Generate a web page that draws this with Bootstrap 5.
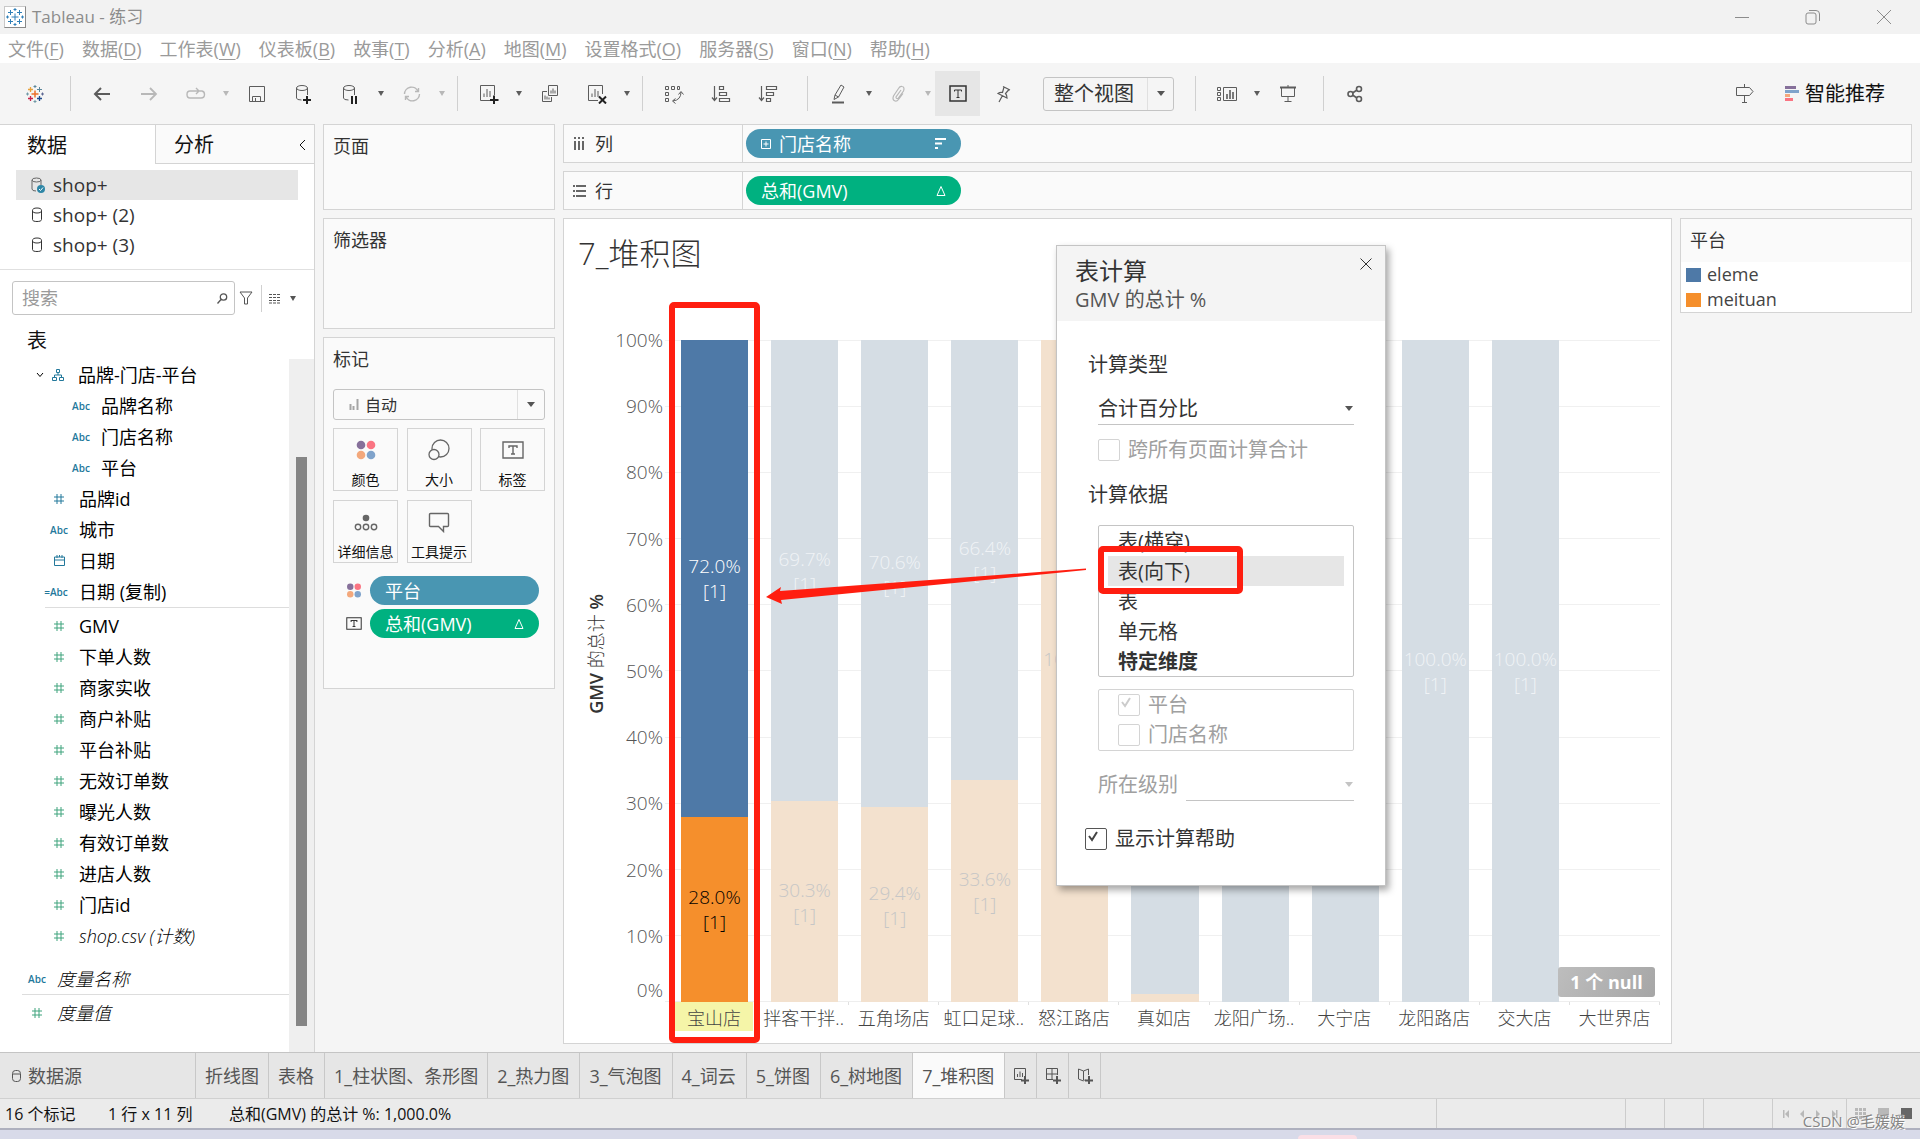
<!DOCTYPE html>
<html lang="zh-CN">
<head>
<meta charset="utf-8">
<meta name="viewport" content="width=device-width, initial-scale=1">
<title>Tableau - 练习</title>
<link href="https://cdn.jsdelivr.net/npm/bootstrap@5.3.0/dist/css/bootstrap.min.css" rel="stylesheet">
<style>
:root{--line:#d4d4d4;--ink:#333;--dim:#23789b;--mea:#3fa37c;--red:#ff1e10}
body{font-family:"Open Sans","Noto Sans CJK SC",sans-serif;font-size:18px;line-height:24px;color:var(--ink);background:#f5f5f5;overflow:hidden}
svg{display:block;fill:none;stroke:currentColor;flex:none}
svg.flat{stroke:none}
button{font:inherit;color:inherit;background:none;border:0;padding:0}
a{color:inherit;text-decoration:none}
h1,h2,h3,p,ul{margin:0;padding:0;font-size:inherit;font-weight:400;line-height:inherit}
.app{height:100vh;min-height:900px}
/* window title and menus */
.titlebar{height:34px;background:#f2f2f2;color:#8c8c8c;font-size:17px}
.app-logo{width:22px;height:22px;background:#fff;border:1px solid #c8c8c8;border-right-color:#888;border-bottom-color:#888;color:#2e7fb8;margin-right:6px}
.menubar{height:29px;background:#fff;color:#9a9a9a;gap:18px;padding-left:8px}
.menubar u{text-underline-offset:3px}
/* toolbar */
.toolbar-row{height:61px;color:#5c5c5c;padding-left:11px}
.tb{width:47px;height:45px;display:flex;align-items:center;justify-content:center}
.tb-on{background:#e6e6e6;color:#333;width:45px}
.drop{width:14px;height:45px;display:flex;align-items:center;justify-content:center}
.drop::after,.tri{content:"";border:3px solid transparent;border-top:5px solid currentColor;border-bottom:0}
.faint{color:#b8b8b8}
.vsep{width:1px;height:35px;background:#d0d0d0;margin:0 7px 0 8px}
.vsep-lead{margin-left:12px}
.vsep-wide{margin-left:21px}
.pick{position:relative;border:1px solid #c4c4c4;border-radius:3px;display:flex;align-items:center}
.pick select{appearance:none;background:none;border:0;width:100%;height:100%;color:var(--ink);outline:0}
.pick .knob{position:absolute;right:0;top:0;bottom:0;border-left:1px solid #e0e0e0;display:flex;align-items:center;justify-content:center;pointer-events:none;color:#555}
.pick .knob.faint{color:#c4c4c4}
.knob::after{content:"";border:4px solid transparent;border-top:5px solid currentColor;border-bottom:0}
.fit{width:131px;height:34px;margin-left:16px}.fit select{font-size:20px;padding:1px 0 0 10px}.fit .knob{width:26px}
.smart{font-size:20px;color:#111;gap:6px}
/* data pane */
.datapane{width:315px;background:#fff;border-top:1px solid var(--line);border-right:1px solid var(--line)}
.ptab{height:39px;font-size:20px;color:#111;text-align:left;padding-top:2px}
.ptab-off{background:#fafafa;border-left:1px solid var(--line);border-bottom:1px solid var(--line);padding-left:18px}
.sources{padding:6px 16px 8px;height:106px;border-bottom:1px solid #e0e0e0;font-size:19px}
.sources a{display:flex;align-items:center;height:30px;padding-left:14px;gap:7px}
.sources a.on{background:#e6e6e6}
.finder{padding:11px 12px 0;color:#555}
.searchbox{width:223px;height:34px;border:1px solid #c4c4c4;border-radius:3px;padding-right:6px}
.searchbox input{border:0;background:none;width:190px;padding:0 0 0 9px;outline:0}
.searchbox input::placeholder{color:#9a9a9a}
.tbl-title{font-size:20px;color:#111;padding:14px 0 6px 27px;line-height:24px}
.fields{color:#000}
.fields li{height:31px;display:flex;align-items:center;list-style:none;padding-left:45px}
.fields li.sub{padding-left:67px}
.fields .ico{width:28px;display:flex;justify-content:center;margin-right:6px;color:var(--dim);font-size:10px;font-weight:600;white-space:nowrap}
.fields .mea .ico{color:var(--mea)}
.fields .calc .ico{margin-left:-3px;margin-right:9px}
.fields .top0{padding-left:23px}
.fields .aside-row{margin-top:12px}
.hr-in{background:#ddd;margin-left:45px;margin-bottom:2px}
.fields li.hr-in{height:1px;padding:0}
.fields li.hr-out{margin-left:22px}
.sbar{width:25px;background:#efefef;padding:98px 7px 26px}
.sbar div{background:#858585;height:100%}
/* cards and shelves */
.pane{background:#fafafa;border:1px solid var(--line)}
.cards{width:232px;gap:8px}
.cards h2{padding:8px 9px 0;line-height:26px}
.c1{height:86px}.c2{height:111px}.c3{height:352px}
.marktype{height:31px;margin:17px 9px 8px}.marktype select{padding-left:31px;font-size:16px}.marktype .knob{width:27px}
.marktype svg{position:absolute;left:15px;color:#a5a5a5}
.mk-grid{display:grid;grid-template-columns:65px 65px 65px;justify-content:space-between;row-gap:9px;margin:0 9px 13px}
.mk{height:63px;border:1px solid var(--line);font-size:14px;color:#111;line-height:20px;display:flex;flex-direction:column;align-items:center;justify-content:space-between;padding:10px 0 0;white-space:nowrap}
.mk svg{color:#666}
.pill{height:29px;border-radius:15px;color:#fff;display:flex;align-items:center;padding:0 15px;text-align:left}
.pill-b{background:#4996b2}.pill-g{background:#00b180}
.encode{padding:0 15px 4px 20px;gap:6px}
.shelf{height:39px}
.shelf h2{width:179px;border-right:1px solid var(--line);height:100%;padding-left:9px;gap:8px}
.shelf h2 svg{color:#666}
.shelf .pill{width:215px;margin-left:3px}
.gap8{gap:8px}
/* worksheet */
.sheet{background:#fff;border:1px solid var(--line);position:relative;padding:16px 11px 12px 14px}
.sheet h1{font-size:31px;font-weight:300;line-height:36px}
.viz{padding-top:69px}
.ytitle{width:35px;display:flex;align-items:center;justify-content:center;padding-bottom:64px}
.ytitle span{writing-mode:vertical-rl;text-orientation:sideways;transform:rotate(180deg);font-size:18px;font-weight:600;white-space:nowrap}
.ytitle i{font-style:normal;font-weight:300}
.ticks{width:50px;margin-bottom:29px;font-size:19px;font-weight:300;color:#555;text-align:right}
.ticks div{flex:1 1 0;display:flex;flex-direction:column;justify-content:space-between}
.ticks span{margin-top:-12px}
.ticks span+span{margin:0}
.plot{position:relative;margin-left:6px}
.gridl{position:absolute;inset:0 0 29px -4px;display:flex;flex-direction:column;border-bottom:1px solid #eee}
.gridl div{flex:1 1 0;border-top:1px solid #f0f0f0}
.colm{position:relative;flex:1 1 0;min-width:0;display:flex;flex-direction:column}
.stack{flex:1;margin:0 11px 0 12px;min-height:0}
.stack>div{display:flex;flex-direction:column;align-items:center;justify-content:center;font-size:19px;font-weight:300;line-height:25px;padding-top:2px}
.e{background:#d5dde4;color:#f0f3f6}.m{background:#f3e1ce;color:#c6c6c6}
.colm.sel .e{background:#4e79a7;color:#fff}.colm.sel .m{background:#f58f2c;color:#000}
.cat{height:29px;line-height:32px;text-align:center;font-size:18px;font-weight:300;color:#444;white-space:nowrap;border-right:1px solid transparent;border-image:linear-gradient(#e0e0e0 4px,transparent 4px) 1}
.sel .cat{background:#f5f5a8;margin:0 6px;border:0}
.ring{position:absolute;border:6px solid var(--red);border-radius:5px;pointer-events:none}
.ring-bar{inset:-38px -1px -12px 0;z-index:2}
.nulls{position:absolute;right:16px;bottom:46px;width:97px;height:30px;border-radius:3px;background:linear-gradient(120deg,#bdbdbd,#a6a6a6);color:#fff;font-weight:700;line-height:30px;text-align:center}
.legend{width:232px;height:95px}
.legend h2{height:43px;padding:9px 9px 0}
.legend li{background:#fff;height:25px;padding:0 5px;display:flex;align-items:center;gap:6px;list-style:none;line-height:25px;color:#444}
.sw{width:15px;height:14px}
.sw-e{background:#4e79a7}.sw-m{background:#f58f2c}
/* table calculation window */
.calcwin{position:absolute;left:492px;top:26px;width:330px;height:641px;background:#fff;border:1px solid #c4c4c4;box-shadow:3px 4px 7px rgba(0,0,0,.35);font-size:20px;z-index:3}
.calcwin header{background:#f4f4f4;height:75px;padding:10px 13px 0 18px}
.calcwin header h2{font-size:24px;line-height:30px}
.calcwin header p{line-height:28px;color:#555}
.calcwin .body{padding:29px 31px 0}
.calcwin h3{line-height:30px}
.linesel{border:0;border-bottom:1px solid #c4c4c4;border-radius:0;height:32px;flex:1}
.linesel select{padding:0}
.linesel .knob{border:0;width:10px}
.in{margin-left:10px}
.calcwin input{appearance:none;width:22px;height:22px;border:1px solid #555;border-radius:2px;margin:0;background:#fff no-repeat 2px 2px;flex:none}
.calcwin input:checked{background-image:url("data:image/svg+xml,%3Csvg xmlns='http://www.w3.org/2000/svg' width='11' height='11'%3E%3Cpath d='M1 5l3 4 5-8' fill='none' stroke='%23444' stroke-width='2'/%3E%3C/svg%3E")}
.calcwin input:disabled{border-color:#d4d4d4}
.calcwin input:disabled:checked{background-image:url("data:image/svg+xml,%3Csvg xmlns='http://www.w3.org/2000/svg' width='11' height='11'%3E%3Cpath d='M1 5l3 4 5-8' fill='none' stroke='%23ccc' stroke-width='2'/%3E%3C/svg%3E")}
.off{color:#a0a0a0}
.chk{display:flex;align-items:center;gap:8px;height:30px}
.calctype{margin-top:13px}
.allpages{margin-top:10px}
.h-basis{margin-top:15px}
.scope{border:1px solid #c4c4c4;border-radius:2px;height:152px;padding:0 9px;margin-top:15px}
.scope button{display:block;width:100%;text-align:left;height:30px;padding-left:10px;line-height:32px}
.scope .on{background:#e6e6e6}
.dims{border:1px solid #d4d4d4;border-radius:2px;height:62px;padding-left:19px;margin-top:12px}
.level{margin-top:18px}
.helpchk{margin:23px 0 0 -3px}
.ring-opt{left:41px;top:300px;width:145px;height:48px}
.arrow{position:absolute;left:202px;top:340px;z-index:4;fill:var(--red);stroke:none}
/* sheet tabs and status */
.tabsrow{height:47px;background:#e6e6e6;border-top:1px solid #c4c4c4;border-bottom:1px solid #d0d0d0;color:#555}
.tabsrow a,.tabsrow button{border-right:1px solid #c8c8c8;padding:0 9px;display:flex;align-items:center;white-space:nowrap}
.tabsrow a.first{width:196px;gap:7px;padding-left:12px}
.tabsrow a.num{padding-right:10px}
.tabsrow a.on{background:#fafafa}
.tabsrow button{width:32px;padding:0;justify-content:center}
.status{height:31px;background:#ebebeb;color:#111;font-size:16px;border-bottom:2px solid #aeb0be}
.status .cellx{border-left:1px solid #ccc;height:100%}
.w-a{width:189px}.w-b{width:39px}.w-c{width:69px}.w-d{width:74px}
.taskedge{height:9px;background:#d8dae9;padding:5px 0 0 1298px}
.taskedge div{width:59px;height:4px;background:#fbdfe6;border-radius:5px 5px 0 0}
.stamp{position:absolute;right:15px;bottom:6px;font-size:15px;color:#858585;text-shadow:1px 1px #fff}
</style>
</head>
<body>
<svg width="0" height="0" class="position-absolute">
<symbol id="db" viewBox="0 0 12 16"><ellipse cx="6" cy="3.500" rx="4.500" ry="2.500"/><path d="M1.500 3.500v9c0 1.500 2 2 4.500 2s4.500-.5 4.500-2v-9"/></symbol>
<symbol id="hash" viewBox="0 0 12 12"><path d="M4 1v10M8 1v10M1 4h10M1 8h10"/></symbol>
<symbol id="dots4" viewBox="0 0 20 20"><g stroke="none"><circle cx="5" cy="5" r="4.300" fill="#86709a"/><circle cx="15" cy="5" r="4.300" fill="#fa7482"/><circle cx="5" cy="15" r="4.300" fill="#f3a87c"/><circle cx="15" cy="15" r="4.300" fill="#7fa3cb"/></g></symbol>
<symbol id="tbox" viewBox="0 0 22 18"><path d="M1 1h20v16H1z"/><path d="M7 7V5h8v2M11 5v8M9 13h4"/></symbol>
<symbol id="tabl" viewBox="0 0 18 18"><path d="M9 5.500v7M5.500 9h7"/><path d="M4.500 2v5M2 4.500h5M13.500 2v5M11 4.500h5M4.500 11v5M2 13.500h5M13.500 11v5M11 13.500h5M9 0v3M7.500 1.500h3M9 15v3M7.500 16.500h3M0 9h3M1.500 7.500v3M15 9h3M16.500 7.500v3"/></symbol>
<symbol id="delta" viewBox="0 0 10 12"><path d="M5 1.500L1 10.500h8z"/></symbol>
</svg>
<div class="app d-flex flex-column position-relative">
<header class="titlebar d-flex align-items-center flex-shrink-0 ps-1">
 <span class="app-logo d-flex align-items-center justify-content-center"><svg width="18" height="18"><use href="#tabl"/></svg></span>
 <span>Tableau - 练习</span>
 <div class="ms-auto d-flex align-items-center" style="gap:55px;padding-right:28px">
  <button aria-label="最小化"><svg width="16" height="16"><path d="M1 8.500h14"/></svg></button>
  <button aria-label="还原"><svg width="16" height="16"><rect x="1" y="4" width="10" height="11" rx="2"/><path d="M4 1.500h7q3.500 0 3.500 3.500v7"/></svg></button>
  <button aria-label="关闭"><svg width="16" height="16"><path d="M1 1l14 14M15 1L1 15"/></svg></button>
 </div>
</header>
<nav class="menubar d-flex align-items-center flex-shrink-0">
 <a href="#">文件(<u>F</u>)</a><a href="#">数据(<u>D</u>)</a><a href="#">工作表(<u>W</u>)</a><a href="#">仪表板(<u>B</u>)</a><a href="#">故事(<u>T</u>)</a><a href="#">分析(<u>A</u>)</a><a href="#">地图(<u>M</u>)</a><a href="#">设置格式(<u>O</u>)</a><a href="#">服务器(<u>S</u>)</a><a href="#">窗口(<u>N</u>)</a><a href="#">帮助(<u>H</u>)</a>
</nav>
<div class="toolbar-row d-flex align-items-center flex-shrink-0">
 <button class="tb" aria-label="开始"><svg width="18" height="18" viewBox="0 0 18 18"><path stroke="#eb6f2a" stroke-width="1.500" d="M9 5.500v7M5.500 9h7"/><path stroke="#e8a23c" stroke-width="1.300" d="M4.500 2v5M2 4.500h5"/><path stroke="#5b879b" d="M13.500 2v5M11 4.500h5M9 0v3M7.500 1.500h3"/><path stroke="#c8234a" stroke-width="1.300" d="M4.500 11v5M2 13.500h5"/><path stroke="#1f4a8c" stroke-width="1.300" d="M13.500 11v5M11 13.500h5"/><path stroke="#7199a6" d="M0 9h3M1.500 7.500v3M9 15v3M7.500 16.500h3"/><path stroke="#5c6692" d="M15 9h3M16.500 7.500v3"/></svg></button>
 <i class="vsep vsep-lead"></i>
 <button class="tb" aria-label="后退"><svg width="18" height="16" stroke-width="2"><path d="M17 8H2M8 2L2 8l6 6"/></svg></button>
 <button class="tb faint" aria-label="前进"><svg width="18" height="16" stroke-width="1.800"><path d="M1 8h15M10 2l6 6-6 6"/></svg></button>
 <button class="tb faint" aria-label="重做"><svg width="20" height="14"><path d="M12 4H4q-3 0-3 3.500T4 11h11q3.500 0 3.500-3.500 0-3-2.500-3.500h-3M10 1l3 3-3 3" stroke-width="1.400"/></svg></button>
 <button class="drop faint" aria-label="更多"></button>
 <button class="tb" aria-label="保存"><svg width="18" height="18"><path d="M1.500 1.500h15v15h-15zM4.500 16.500v-5h8v5M7.500 13v3.500"/></svg></button>
 <button class="tb" aria-label="新建数据源"><svg width="18" height="20"><ellipse cx="7" cy="4" rx="5.500" ry="2.500"/><path d="M1.500 4v10q0 2 5 2M12.500 4v7"/><path stroke="#222" stroke-width="2" d="M12 12v8M8 16h8"/></svg></button>
 <button class="tb" aria-label="暂停更新"><svg width="18" height="20"><ellipse cx="7" cy="4" rx="5.500" ry="2.500"/><path d="M1.500 4v10q0 2 5 2M12.500 4v7"/><path stroke="#222" stroke-width="2" d="M10 12v8M14 12v8"/></svg></button>
 <button class="drop" aria-label="更多"></button>
 <button class="tb faint" aria-label="刷新"><svg width="20" height="18" stroke-width="1.400"><path d="M2.500 9A7 7 0 0 1 16 6.500M17.500 9A7 7 0 0 1 4 11.500M13 6.500h3.500V3M7 11.500H3.500V15"/></svg></button>
 <button class="drop faint" aria-label="更多"></button>
 <i class="vsep"></i>
 <button class="tb" aria-label="新建工作表"><svg width="20" height="20"><path d="M11 16.500H1.500v-15h14V11M5 13V9.500M8 13V5M11 13V7"/><path stroke="#222" stroke-width="2" d="M15 11.500V20M11 16h8.500"/></svg></button>
 <button class="drop" aria-label="更多"></button>
 <button class="tb" aria-label="复制"><svg width="18" height="18"><path d="M7.500.5h9v10h-9zM6 6.500H1.500v10h9V12M10 8.500v-3M12 8.500v-5M14 8.500v-3M4 14.500v-4M6 14.500v-3M8 14.500v-2"/></svg></button>
 <button class="tb" aria-label="清除"><svg width="20" height="20"><path d="M11 16.500H1.500v-15h14V10M5 13V9.500M8 13V5M11 13V7"/><path stroke="#222" stroke-width="2" d="M12 12.500l7 7M19 12.500l-7 7"/></svg></button>
 <button class="drop" aria-label="更多"></button>
 <i class="vsep"></i>
 <button class="tb" aria-label="交换"><svg width="20" height="20"><path d="M1.500 2.500h3v3h-3zM7.500 2.500h3v3h-3zM13.500 2.500h2v3h-2zM1.500 8.500h3v3h-3zM1.500 14.500h3v3h-3zM17 8q0 8-8 9M14.500 10.500L17 7.500l2.500 3M11.500 14.500L8.500 17l3 2.500"/></svg></button>
 <button class="tb" aria-label="升序"><svg width="20" height="18"><path d="M3.500 1v14M1 12.500l2.500 3 2.500-3M8.500 1.500h4v3h-4zM8.500 7.500h7v3h-7zM8.500 13.500h10v3h-10z" stroke-width="1.200"/></svg></button>
 <button class="tb" aria-label="降序"><svg width="20" height="18"><path d="M3.500 1v14M1 12.500l2.500 3 2.500-3M8.500 1.500h10v3h-10zM8.500 7.500h7v3h-7zM8.500 13.500h4v3h-4z" stroke-width="1.200"/></svg></button>
 <i class="vsep ms-3"></i>
 <button class="tb" aria-label="突出显示"><svg width="18" height="20"><path d="M5 11L11 1l3 2-5.500 10L4 15.500zM5 11l3.500 2"/><path d="M2 18.500h12" stroke-width="2"/></svg></button>
 <button class="drop" aria-label="更多"></button>
 <button class="tb tb-on bg-transparent faint" aria-label="附件"><svg width="16" height="18" stroke-width="1.200"><path d="M10 5L5 12q0 2 2 1.500L12.500 6Q14 2 11 1.500 9 1 7.500 3.500L2.500 11Q1 15 4 16q2 .5 3.500-1.500l4.500-6" stroke="#b8b8b8"/></svg></button>
 <button class="drop faint" aria-label="更多"></button>
 <button class="tb tb-on" aria-label="显示标记标签"><svg width="18" height="17" viewBox="0 0 18 17"><rect x="1" y="1" width="16" height="15" stroke-width="1.500"/><path d="M5.500 6.500V5h7v1.500M9 5v7.500M7.500 12.500h3"/></svg></button>
 <button class="tb" aria-label="固定"><svg width="16" height="18" stroke-width="1.200"><path d="M7 1.500l7 3.500M8 2L6.500 7.500Q4 7 2 8.500l9 4.500q0-3-1.500-4.500L13 4.500M6.500 10.500L3 17"/></svg></button>
 <div class="pick fit"><select aria-label="视图适合方式"><option>整个视图</option></select><i class="knob"></i></div>
 <i class="vsep vsep-wide"></i>
 <button class="tb" aria-label="卡片"><svg width="22" height="16"><path d="M1.500 1.500h3v3h-3zM1.500 6.500h3v3h-3zM1.500 11.500h3v3h-3zM7.500 1.500h13v13h-13z"/><path d="M11 13V8M14 13V4M17 13V6" stroke-width="1.600"/></svg></button>
 <button class="drop" aria-label="更多"></button>
 <button class="tb" aria-label="演示"><svg width="18" height="18"><path d="M1 2.500h16" stroke-width="2"/><path d="M2.500 3v8.500h13V3M9 0v2M9 11.500V17M5.500 16.500h7"/></svg></button>
 <i class="vsep vsep-lead"></i>
 <button class="tb" aria-label="共享"><svg width="16" height="18" stroke-width="1.600"><circle cx="3.500" cy="9" r="2.500"/><circle cx="12" cy="4" r="2.500"/><circle cx="12" cy="14" r="2.500"/><path d="M5.500 8L10 5M5.500 10l4.500 3"/></svg></button>
 <div class="ms-auto d-flex align-items-center" style="padding-right:35px;gap:30px">
  <button aria-label="指南"><svg width="20" height="20"><path d="M1.500 3.500h13l3.500 4-3.500 4h-13zM9.500 0v3M9.500 12v6.500M7 18.500h5"/></svg></button>
  <button class="smart d-flex align-items-center"><svg class="flat" width="14" height="16"><path fill="#86709a" d="M0 0h11v3H0z"/><path fill="#7fa3cb" d="M0 4h14v3H0z"/><path fill="#f3a87c" d="M0 8h5v3H0z"/><path fill="#fa7482" d="M0 12h8v3H0z"/></svg>智能推荐</button>
 </div>
</div>

<main class="d-flex flex-grow-1" style="min-height:0">
 <aside class="datapane d-flex flex-column flex-shrink-0">
  <div class="d-flex flex-shrink-0"><button class="ptab" style="width:155px;padding-left:27px">数据</button><button class="ptab ptab-off flex-grow-1 d-flex align-items-center">分析<svg class="ms-auto me-2" width="7" height="12"><path d="M6 1L1 6l5 5"/></svg></button></div>
  <div class="sources flex-shrink-0">
   <a href="#" class="on"><svg width="16" height="18"><g stroke="#666"><ellipse cx="6.500" cy="4" rx="4.500" ry="2"/><path d="M2 4v9q0 2 4 2M11 4v5"/></g><circle cx="11" cy="13" r="4" fill="#2e86a6" stroke="none"/><path stroke="#fff" d="M9 13l1.500 1.500L13 11.500"/></svg>shop+</a>
   <a href="#"><svg width="16" height="16" viewBox="-1 0 16 16"><use href="#db" width="12" height="16"/></svg>shop+ (2)</a>
   <a href="#"><svg width="16" height="16" viewBox="-1 0 16 16"><use href="#db" width="12" height="16"/></svg>shop+ (3)</a>
  </div>
  <div class="finder d-flex align-items-center flex-shrink-0">
   <div class="searchbox d-flex align-items-center justify-content-between"><input type="search" placeholder="搜索" aria-label="搜索"><svg width="11" height="11" stroke-width="1.300"><circle cx="6.500" cy="4" r="3.200"/><path d="M4 6.500L.5 10.500"/></svg></div>
   <button class="ms-1" aria-label="筛选"><svg width="14" height="14"><path d="M1 1h12L8.500 7v6h-3V7z"/></svg></button>
   <i class="vsep" style="height:27px"></i>
   <button class="d-flex align-items-center" style="gap:9px" aria-label="查看"><svg width="12" height="11"><path d="M0 1.500h12M0 4.500h12M0 7.500h12M0 10h12" stroke-dasharray="3 1" stroke-width="1.200"/></svg><i class="tri"></i></button>
  </div>
  <h2 class="tbl-title flex-shrink-0">表</h2>
  <div class="d-flex flex-grow-1" style="min-height:0">
   <ul class="fields flex-grow-1">
    <li style="padding-left:36px"><svg width="8" height="6"><path d="M1 1l3 3.500L7 1"/></svg><span class="ico"><svg width="12" height="12"><path d="M4.500.5h3v3h-3zM.5 8.500h4v3h-4zM7.500 8.500h4v3h-4zM6 3.500V6M2.500 8.500V6h7v2.500"/></svg></span>品牌-门店-平台</li>
    <li class="sub"><span class="ico">Abc</span>品牌名称</li>
    <li class="sub"><span class="ico">Abc</span>门店名称</li>
    <li class="sub"><span class="ico">Abc</span>平台</li>
    <li><span class="ico"><svg width="12" height="12"><use href="#hash"/></svg></span>品牌id</li>
    <li><span class="ico">Abc</span>城市</li>
    <li><span class="ico"><svg width="11" height="11"><path d="M.5 2h10v8.500H.5zM.5 5h10M3 0v3M8 0v3M5.500 0v2"/></svg></span>日期</li>
    <li class="calc"><span class="ico">=Abc</span>日期 (复制)</li>
    <li class="hr-in"></li>
    <li class="mea"><span class="ico"><svg width="12" height="12"><use href="#hash"/></svg></span>GMV</li>
    <li class="mea"><span class="ico"><svg width="12" height="12"><use href="#hash"/></svg></span>下单人数</li>
    <li class="mea"><span class="ico"><svg width="12" height="12"><use href="#hash"/></svg></span>商家实收</li>
    <li class="mea"><span class="ico"><svg width="12" height="12"><use href="#hash"/></svg></span>商户补贴</li>
    <li class="mea"><span class="ico"><svg width="12" height="12"><use href="#hash"/></svg></span>平台补贴</li>
    <li class="mea"><span class="ico"><svg width="12" height="12"><use href="#hash"/></svg></span>无效订单数</li>
    <li class="mea"><span class="ico"><svg width="12" height="12"><use href="#hash"/></svg></span>曝光人数</li>
    <li class="mea"><span class="ico"><svg width="12" height="12"><use href="#hash"/></svg></span>有效订单数</li>
    <li class="mea"><span class="ico"><svg width="12" height="12"><use href="#hash"/></svg></span>进店人数</li>
    <li class="mea"><span class="ico"><svg width="12" height="12"><use href="#hash"/></svg></span>门店id</li>
    <li class="mea fst-italic fw-light"><span class="ico"><svg width="12" height="12"><use href="#hash"/></svg></span>shop.csv (计数)</li>
    <li class="top0 aside-row fst-italic fw-light"><span class="ico fst-normal">Abc</span>度量名称</li>
    <li class="hr-in hr-out"></li>
    <li class="mea top0 fst-italic fw-light"><span class="ico"><svg width="12" height="12"><use href="#hash"/></svg></span>度量值</li>
   </ul>
   <div class="sbar flex-shrink-0"><div></div></div>
  </div>
 </aside>

 <section class="cards d-flex flex-column flex-shrink-0 ms-2">
  <div class="pane c1"><h2>页面</h2></div>
  <div class="pane c2"><h2>筛选器</h2></div>
  <div class="pane c3">
   <h2>标记</h2>
   <div class="pick marktype"><svg width="10" height="11"><path d="M1.500 5v6M4.500 7v4M8.500 0v11" stroke-width="2"/></svg><select aria-label="标记类型"><option>自动</option></select><i class="knob"></i></div>
   <div class="mk-grid">
    <button class="mk"><svg width="20" height="22" viewBox="0 -1 20 22"><use href="#dots4" width="20" height="20"/></svg>颜色</button>
    <button class="mk"><svg width="22" height="22" stroke-width="1.300"><circle cx="12.500" cy="9.500" r="8.500"/><circle cx="6" cy="15.500" r="5" fill="#fafafa"/></svg>大小</button>
    <button class="mk"><svg width="22" height="22" viewBox="0 -2 22 22" stroke-width="1.400"><use href="#tbox" width="22" height="18"/></svg>标签</button>
    <button class="mk"><svg width="24" height="22" stroke-width="1.400"><circle cx="12" cy="7" r="3.300" fill="currentColor" stroke="none"/><circle cx="4" cy="16" r="2.700"/><circle cx="12" cy="16" r="2.700"/><circle cx="20" cy="16" r="2.700"/></svg>详细信息</button>
    <button class="mk"><svg width="22" height="22" stroke-width="1.400"><path d="M2.500 2.500h17q1 0 1 1v11q0 1-1 1h-4v5l-5-5h-8q-1 0-1-1v-11q0-1 1-1z"/></svg>工具提示</button>
   </div>
   <div class="encode d-flex align-items-center"><svg width="20" height="15" viewBox="0 0 20 20"><use href="#dots4" width="20" height="20"/></svg><button class="pill pill-b flex-grow-1">平台</button></div>
   <div class="encode d-flex align-items-center"><svg width="20" height="13" viewBox="0 0 22 18" stroke-width="1.400"><use href="#tbox" width="22" height="18"/></svg><button class="pill pill-g flex-grow-1 justify-content-between">总和(GMV)<svg width="10" height="12"><use href="#delta"/></svg></button></div>
  </div>
 </section>

 <section class="d-flex flex-column flex-grow-1 ms-2 me-2 gap8" style="min-width:0;padding-bottom:8px">
  <div class="pane shelf d-flex align-items-center flex-shrink-0"><h2 class="d-flex align-items-center"><svg width="14" height="13" stroke-width="2"><path d="M2 4v9M6 4v9M10 4v9M2 0v2M6 0v2M10 0v2"/></svg>列</h2><button class="pill pill-b"><svg width="10" height="10"><path d="M.5.500h9v9h-9zM5 2.500v5M2.500 5h5"/></svg><span class="ps-2">门店名称</span><svg class="ms-auto" width="11" height="11" stroke-width="2"><path d="M0 1h11M0 5.500h7M0 10h3"/></svg></button></div>
  <div class="pane shelf d-flex align-items-center flex-shrink-0"><h2 class="d-flex align-items-center"><svg width="14" height="12" stroke-width="2"><path d="M0 1h2M3 1h10M0 6h2M3 6h10M0 11h2M3 11h10"/></svg>行</h2><button class="pill pill-g justify-content-between">总和(GMV)<svg width="10" height="12"><use href="#delta"/></svg></button></div>
  <div class="d-flex flex-grow-1 gap8" style="min-height:0">
   <div class="sheet d-flex flex-column flex-grow-1" style="min-width:0">
    <h1>7_堆积图</h1>
    <div class="viz d-flex flex-grow-1" style="min-height:0">
     <div class="ytitle"><span>GMV <i>的总计</i> %</span></div>
     <div class="ticks d-flex flex-column"><div><span>100%</span></div><div><span>90%</span></div><div><span>80%</span></div><div><span>70%</span></div><div><span>60%</span></div><div><span>50%</span></div><div><span>40%</span></div><div><span>30%</span></div><div><span>20%</span></div><div><span>10%</span><span>0%</span></div></div>
     <div class="plot d-flex flex-grow-1">
      <div class="gridl"><div></div><div></div><div></div><div></div><div></div><div></div><div></div><div></div><div></div><div></div></div>
      <div class="colm sel"><div class="stack"><div class="e" style="height:72%"><span>72.0%</span><span>[1]</span></div><div class="m" style="height:28%"><span>28.0%</span><span>[1]</span></div></div><div class="cat">宝山店</div><div class="ring ring-bar"></div></div>
      <div class="colm"><div class="stack"><div class="e" style="height:69.7%"><span>69.7%</span><span>[1]</span></div><div class="m" style="height:30.3%"><span>30.3%</span><span>[1]</span></div></div><div class="cat">拌客干拌..</div></div>
      <div class="colm"><div class="stack"><div class="e" style="height:70.6%"><span>70.6%</span><span>[1]</span></div><div class="m" style="height:29.4%"><span>29.4%</span><span>[1]</span></div></div><div class="cat">五角场店</div></div>
      <div class="colm"><div class="stack"><div class="e" style="height:66.4%"><span>66.4%</span><span>[1]</span></div><div class="m" style="height:33.6%"><span>33.6%</span><span>[1]</span></div></div><div class="cat">虹口足球..</div></div>
      <div class="colm"><div class="stack"><div class="m" style="height:100%"><span>100.0%</span><span>[1]</span></div></div><div class="cat">怒江路店</div></div>
      <div class="colm"><div class="stack"><div class="e" style="height:98.8%"></div><div class="m" style="height:1.2%"></div></div><div class="cat">真如店</div></div>
      <div class="colm"><div class="stack"><div class="e" style="height:100%"></div></div><div class="cat">龙阳广场..</div></div>
      <div class="colm"><div class="stack"><div class="e" style="height:100%"></div></div><div class="cat">大宁店</div></div>
      <div class="colm"><div class="stack"><div class="e" style="height:100%"><span>100.0%</span><span>[1]</span></div></div><div class="cat">龙阳路店</div></div>
      <div class="colm"><div class="stack"><div class="e" style="height:100%"><span>100.0%</span><span>[1]</span></div></div><div class="cat">交大店</div></div>
      <div class="colm"><div class="stack"></div><div class="cat">大世界店</div></div>
     </div>
    </div>
    <button class="nulls">1 个 null</button>
    <svg class="arrow" width="322" height="50" viewBox="0 0 322 50"><path d="M0 38L15 28l-1 4L320 9.500v1.500L15 41l1 4z"/></svg>
    <div class="calcwin" role="dialog" aria-label="表计算">
     <header class="d-flex justify-content-between"><div><h2>表计算</h2><p>GMV 的总计 %</p></div><button class="align-self-start" style="padding-top:2px" aria-label="关闭"><svg width="12" height="12"><path d="M.5.500l11 11M11.500.5l-11 11"/></svg></button></header>
     <div class="body">
      <h3>计算类型</h3>
      <div class="in pick linesel calctype"><select aria-label="计算类型"><option>合计百分比</option></select><i class="knob"></i></div>
      <label class="in chk off allpages"><input type="checkbox" disabled>跨所有页面计算合计</label>
      <h3 class="h-basis">计算依据</h3>
      <div class="in scope"><button>表(横穿)</button><button class="on">表(向下)</button><button>表</button><button>单元格</button><button class="fw-bold">特定维度</button></div>
      <div class="in dims off"><label class="chk"><input type="checkbox" checked disabled>平台</label><label class="chk"><input type="checkbox" disabled>门店名称</label></div>
      <div class="in off d-flex align-items-center level"><label for="lvl">所在级别</label><div class="pick linesel ms-2"><select id="lvl" disabled></select><i class="knob faint"></i></div></div>
      <label class="chk helpchk"><input type="checkbox" checked>显示计算帮助</label>
     </div>
     <div class="ring ring-opt"></div>
    </div>
   </div>
   <div class="legend pane flex-shrink-0"><h2>平台</h2><ul><li><i class="sw sw-e"></i>eleme</li><li><i class="sw sw-m"></i>meituan</li></ul></div>
  </div>
 </section>
</main>

<nav class="tabsrow d-flex flex-shrink-0">
 <a href="#" class="first"><svg width="9" height="12"><rect x=".5" y=".5" width="8" height="11" rx="3"/><path d="M1 4h7"/></svg>数据源</a><a href="#">折线图</a><a href="#" class="num">表格</a><a href="#">1_柱状图、条形图</a><a href="#" class="num">2_热力图</a><a href="#" class="num">3_气泡图</a><a href="#" class="num">4_词云</a><a href="#" class="num">5_饼图</a><a href="#" class="num">6_树地图</a><a href="#" class="on num">7_堆积图</a>
 <button aria-label="新建工作表"><svg width="16" height="16"><path d="M9 11.500H1.500v-11h11V8M4.500 9V6M7 9V3.500M9.500 9V5"/><path d="M12 8v8M8 12.500h8" stroke-width="2"/></svg></button><button aria-label="新建仪表板"><svg width="16" height="16"><path d="M8 11.500H1.500v-11h11V7M1.500 6h11M7 .5v11"/><path d="M12 8v8M8 12.500h8" stroke-width="2"/></svg></button><button aria-label="新建故事"><svg width="16" height="16"><path d="M8 11.500L6.500 13 1.500 11V1l5 2 5-2v6M6.500 3v9"/><path d="M12 8v8M8 12.500h8" stroke-width="2"/></svg></button>
</nav>
<footer class="status d-flex align-items-center flex-shrink-0">
 <span style="padding-left:5px;width:108px">16 个标记</span><span style="width:121px">1 行 x 11 列</span><span>总和(GMV) 的总计 %: 1,000.0%</span>
 <div class="ms-auto d-flex h-100">
  <div class="cellx w-a"></div><div class="cellx w-b"></div><div class="cellx w-b"></div><div class="cellx w-c"></div>
  <div class="cellx w-d d-flex align-items-center justify-content-center"><svg class="flat" width="56" height="8"><path fill="#b8b8b8" d="M1 0h1.500v8H1zM7 0v8L3 4zM22 0v8l-4-4zM34 0v8l4-4zM50 0v8l4-4zM54 0h1.500v8H54z"/></svg></div>
  <div class="cellx w-d d-flex align-items-center justify-content-center"><svg class="flat" width="58" height="11"><path fill="#b8b8b8" d="M0 0h3v3H0zM4 0h3v3H4zM8 0h3v3H8zM0 4h3v3H0zM4 4h3v3H4zM8 4h3v3H8zM0 8h3v3H0zM4 8h3v3H4zM8 8h3v3H8zM23 0h11v11H23z"/><path fill="#666" d="M46 0h11v11H46z"/></svg></div>
 </div>
</footer>
<div class="taskedge flex-shrink-0"><div></div></div>
<span class="stamp">CSDN @毛媛媛</span>
</div>
<script src="https://cdn.jsdelivr.net/npm/bootstrap@5.3.0/dist/js/bootstrap.bundle.min.js"></script>
</body>
</html>
